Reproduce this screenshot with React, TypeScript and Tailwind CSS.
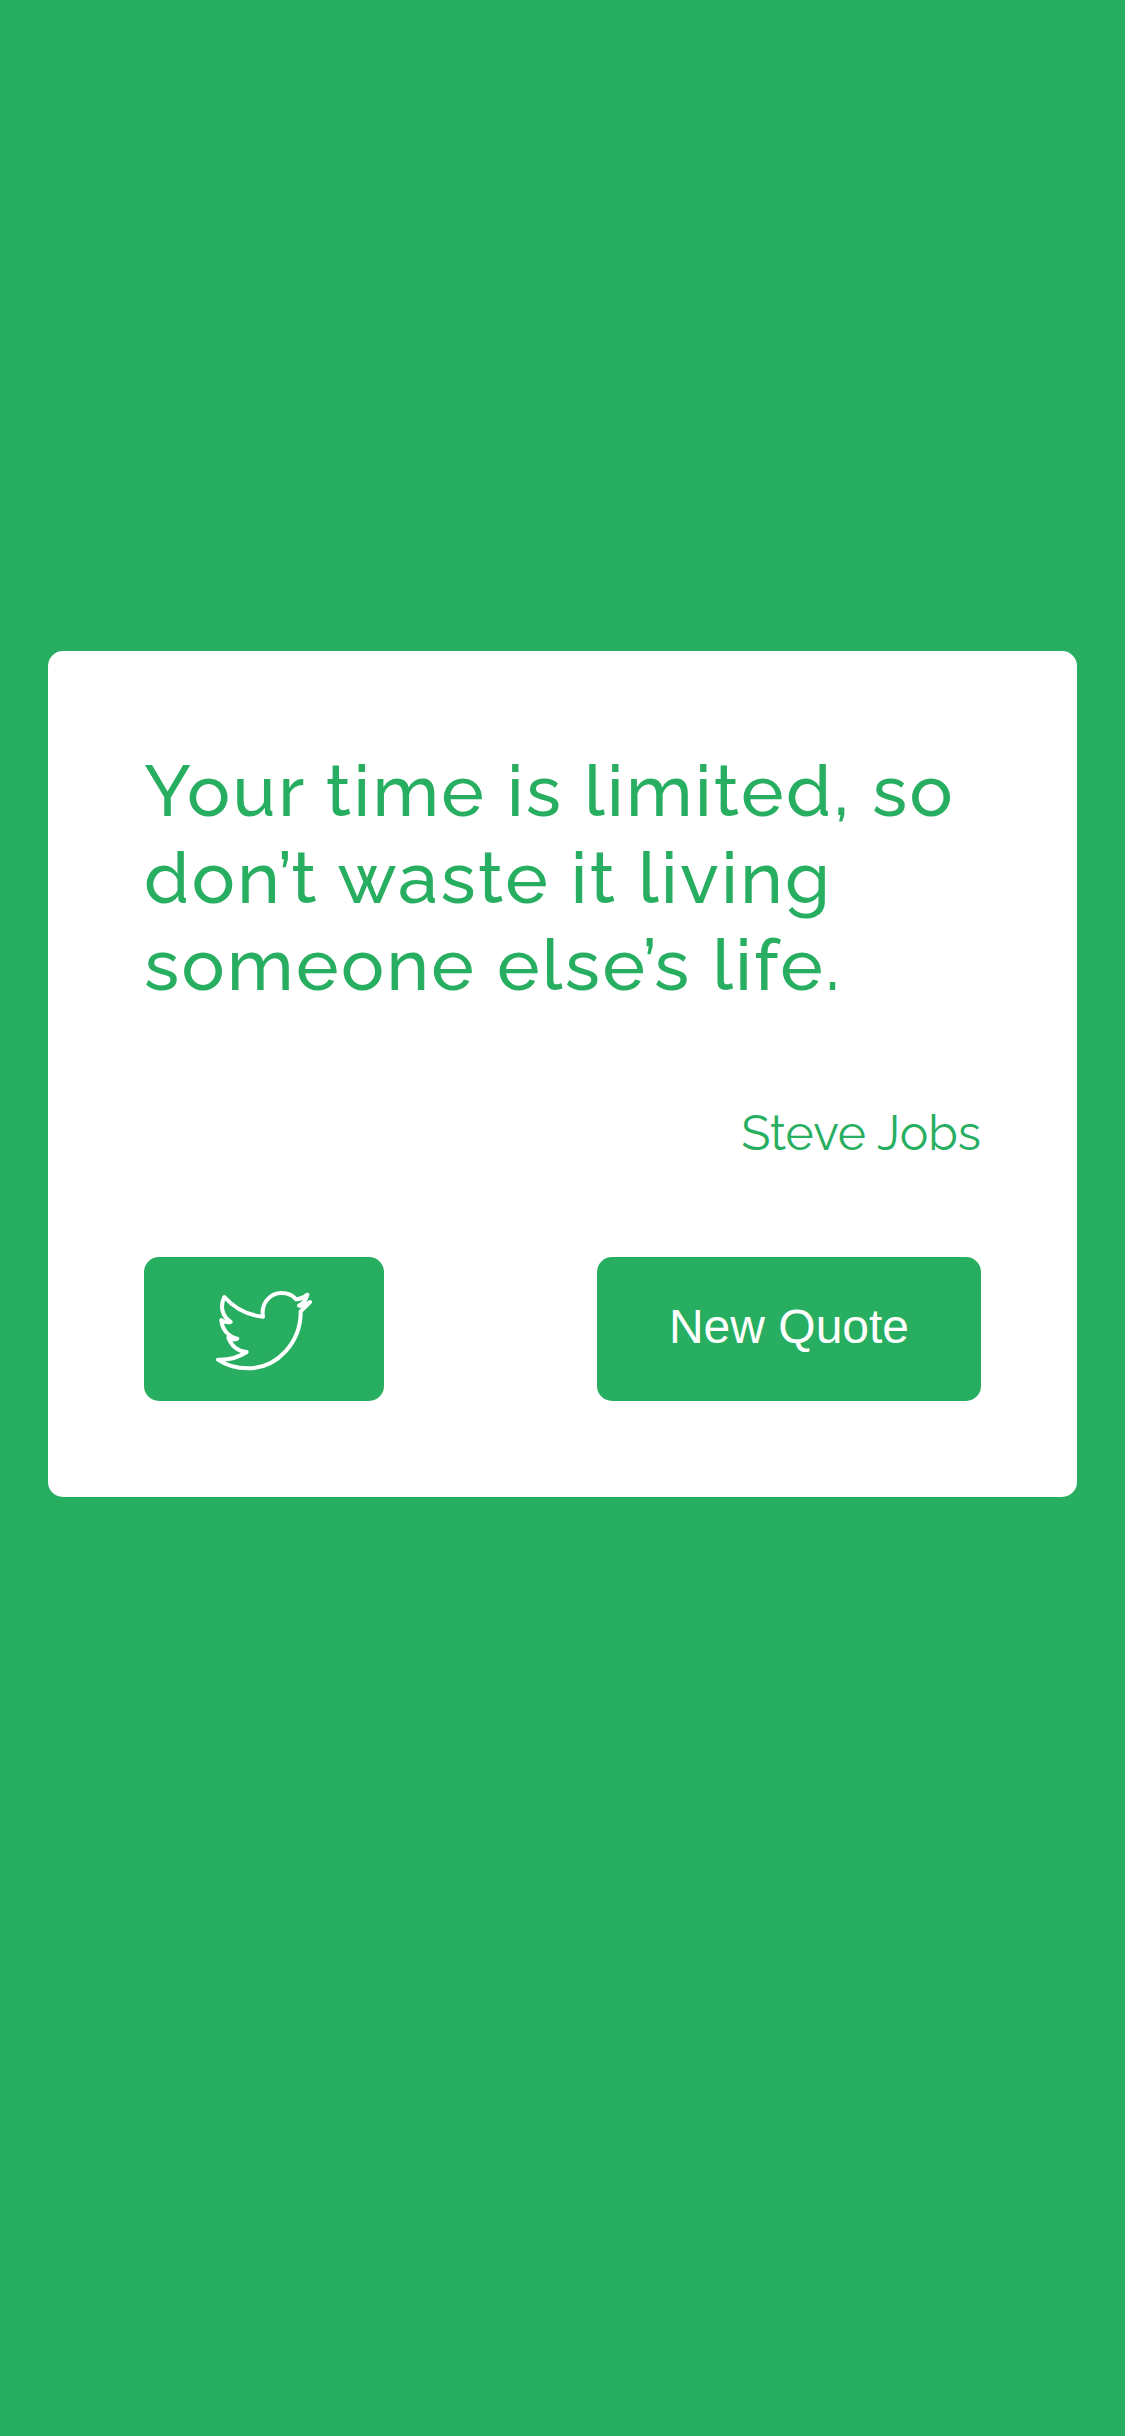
const lines = ["Your time is limited, so", "don’t waste it living", "someone else’s life."];

function BirdIcon() {
  return (
    <svg
      className="size-24"
      viewBox="48 18 288 288"
      fill="none"
      stroke="currentColor"
      strokeWidth="12"
      strokeLinecap="round"
      strokeLinejoin="round"
      aria-hidden="true"
    >
      <path d="M54 254C80 272 113 280 143 280C233 280 303 201 302 109L330 81Q315 93 297 92Q316 83 322 59Q306 72 288 73C278 60 262 54 245 54C211 54 182 84 189 125C143 121 103 99 73 66C60 92 65 123 92 141Q76 144 64 135C66 162 84 185 112 191Q98 197 85 188C93 211 112 229 140 231C115 248 85 255 54 254Z" />
    </svg>
  );
}

export default function App() {
  return (
    <main className="flex h-[2436px] flex-col items-center bg-[#27ae60] px-12 pt-[651px] font-['Raleway','Lato',sans-serif] text-[#27ae60]">
      <section className="flex h-[846px] w-full flex-col rounded-[15px] bg-white p-24">
        <blockquote className="text-[72px] leading-[87px] font-medium tracking-[2.4px] whitespace-nowrap">
          {lines.map((line) => (
            <p key={line}>{line}</p>
          ))}
        </blockquote>
        <p className="mt-[97px] text-right text-[48px] leading-[57px] font-normal">Steve Jobs</p>
        <div className="mt-auto flex justify-between text-white">
          <button aria-label="Tweet quote" className="flex h-36 w-60 items-center justify-center rounded-[15px] bg-[#27ae60]">
            <BirdIcon />
          </button>
          <button className="h-36 w-96 rounded-[15px] bg-[#27ae60] pb-1 font-['Liberation_Sans',sans-serif] text-[48px] leading-none">
            New Quote
          </button>
        </div>
      </section>
    </main>
  );
}
